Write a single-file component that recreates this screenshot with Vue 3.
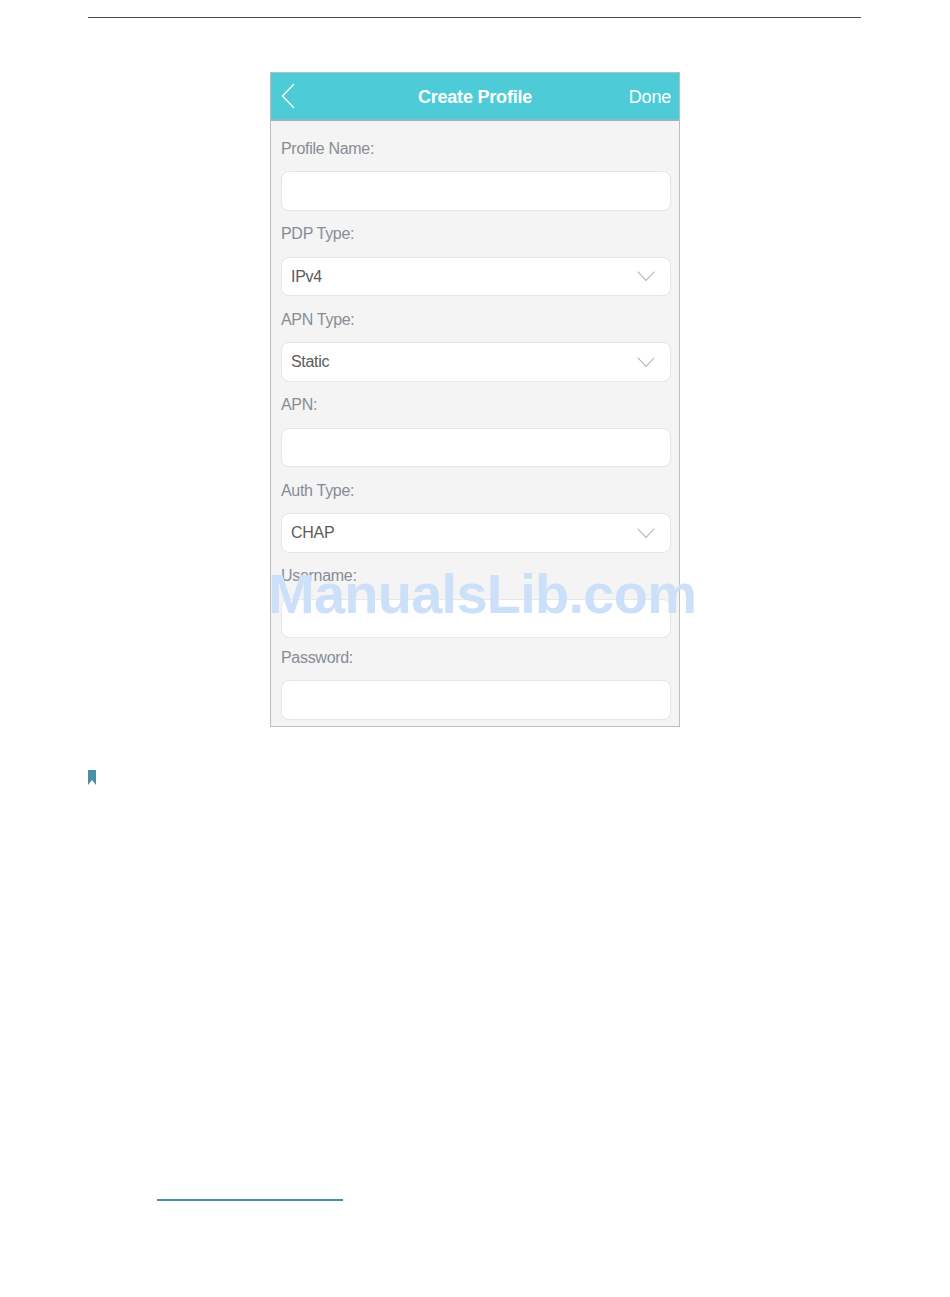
<script setup>
const fields = [
  { label: 'Profile Name:', value: '', select: false },
  { label: 'PDP Type:', value: 'IPv4', select: true },
  { label: 'APN Type:', value: 'Static', select: true },
  { label: 'APN:', value: '', select: false },
  { label: 'Auth Type:', value: 'CHAP', select: true },
  { label: 'Username:', value: '', select: false },
  { label: 'Password:', value: '', select: false, tight: true }
]
</script>

<template>
  <div class="page">
    <hr class="top-rule" />

    <div class="phone">
      <header class="phone-header">
        <svg class="back" viewBox="0 0 14 26" width="14" height="26">
          <path d="M13 1 L1.5 13 L13 25" fill="none" stroke="#fff" stroke-width="1.4" />
        </svg>
        <h1>Create Profile</h1>
        <span class="done">Done</span>
      </header>

      <form class="profile-form">
        <div v-for="f in fields" :key="f.label" class="field" :class="{ tight: f.tight }">
          <label>{{ f.label }}</label>
          <div class="box">
            <span>{{ f.value }}</span>
            <svg v-if="f.select" class="chevron" viewBox="0 0 18 11" width="18" height="11">
              <path d="M0.7 0.7 L9 9.5 L17.3 0.7" fill="none" stroke="#b4b6b8" stroke-width="1.1" />
            </svg>
          </div>
        </div>
      </form>
    </div>

    <svg class="bookmark" viewBox="0 0 8 15" width="8" height="15">
      <path d="M0 0 H8 V15 L4 10 L0 15 Z" fill="#4a8fa3" />
    </svg>

    <div class="footnote-rule"></div>

    <div class="watermark">ManualsLib.com</div>
  </div>
</template>

<style scoped>
.page {
  position: relative;
  width: 950px;
  height: 1297px;
  overflow: hidden;
  background: #fff;
  font-family: "Liberation Sans", Arial, sans-serif;
  padding-top: 17px;
  box-sizing: border-box;
}

.top-rule {
  width: 773px;
  height: 1px;
  margin: 0 0 0 88px;
  border: none;
  background: #4a4a4a;
}

.phone {
  width: 408px;
  height: 653px;
  margin: 54px 0 0 270px;
  border: 1px solid #bdbdbd;
  background: #f4f4f4;
  overflow: hidden;
}

.phone-header {
  position: relative;
  display: flex;
  align-items: center;
  justify-content: center;
  height: 46px;
  background: #4dccd8;
  border-bottom: 2px solid #8fb9c0;
  color: #fff;
}

.phone-header h1 {
  margin: 2px 0 0;
  font-size: 18px;
  letter-spacing: -0.2px;
  font-weight: 700;
}

.back {
  position: absolute;
  left: 10px;
  top: 10px;
}

.done {
  position: absolute;
  right: 8px;
  top: 14px;
  font-size: 18px;
  letter-spacing: -0.2px;
}

.profile-form {
  display: flex;
  flex-direction: column;
  padding: 0 8px 0 10px;
}

.field {
  height: 85.5px;
}

.field.tight {
  margin-top: -4px;
}

.field label {
  display: block;
  height: 50px;
  padding-top: 18.5px;
  box-sizing: border-box;
  font-size: 16px;
  letter-spacing: -0.3px;
  line-height: 18px;
  color: #868d95;
}

.box {
  display: flex;
  align-items: center;
  justify-content: space-between;
  height: 39.5px;
  box-sizing: border-box;
  padding: 1px 15px 0 9px;
  background: #fff;
  border: 1px solid #e6e6e6;
  border-radius: 8px;
  font-size: 16px;
  letter-spacing: -0.3px;
  color: #5b5b5b;
}

.bookmark {
  display: block;
  margin: 43px 0 0 88px;
}

.footnote-rule {
  width: 186px;
  height: 2px;
  margin: 414px 0 0 157px;
  background: #4a8fa3;
}

.watermark {
  position: absolute;
  left: 268px;
  top: 563px;
  font-size: 56px;
  letter-spacing: -0.75px;
  line-height: 62px;
  font-weight: 700;
  color: #cce0fa;
  white-space: nowrap;
}
</style>
